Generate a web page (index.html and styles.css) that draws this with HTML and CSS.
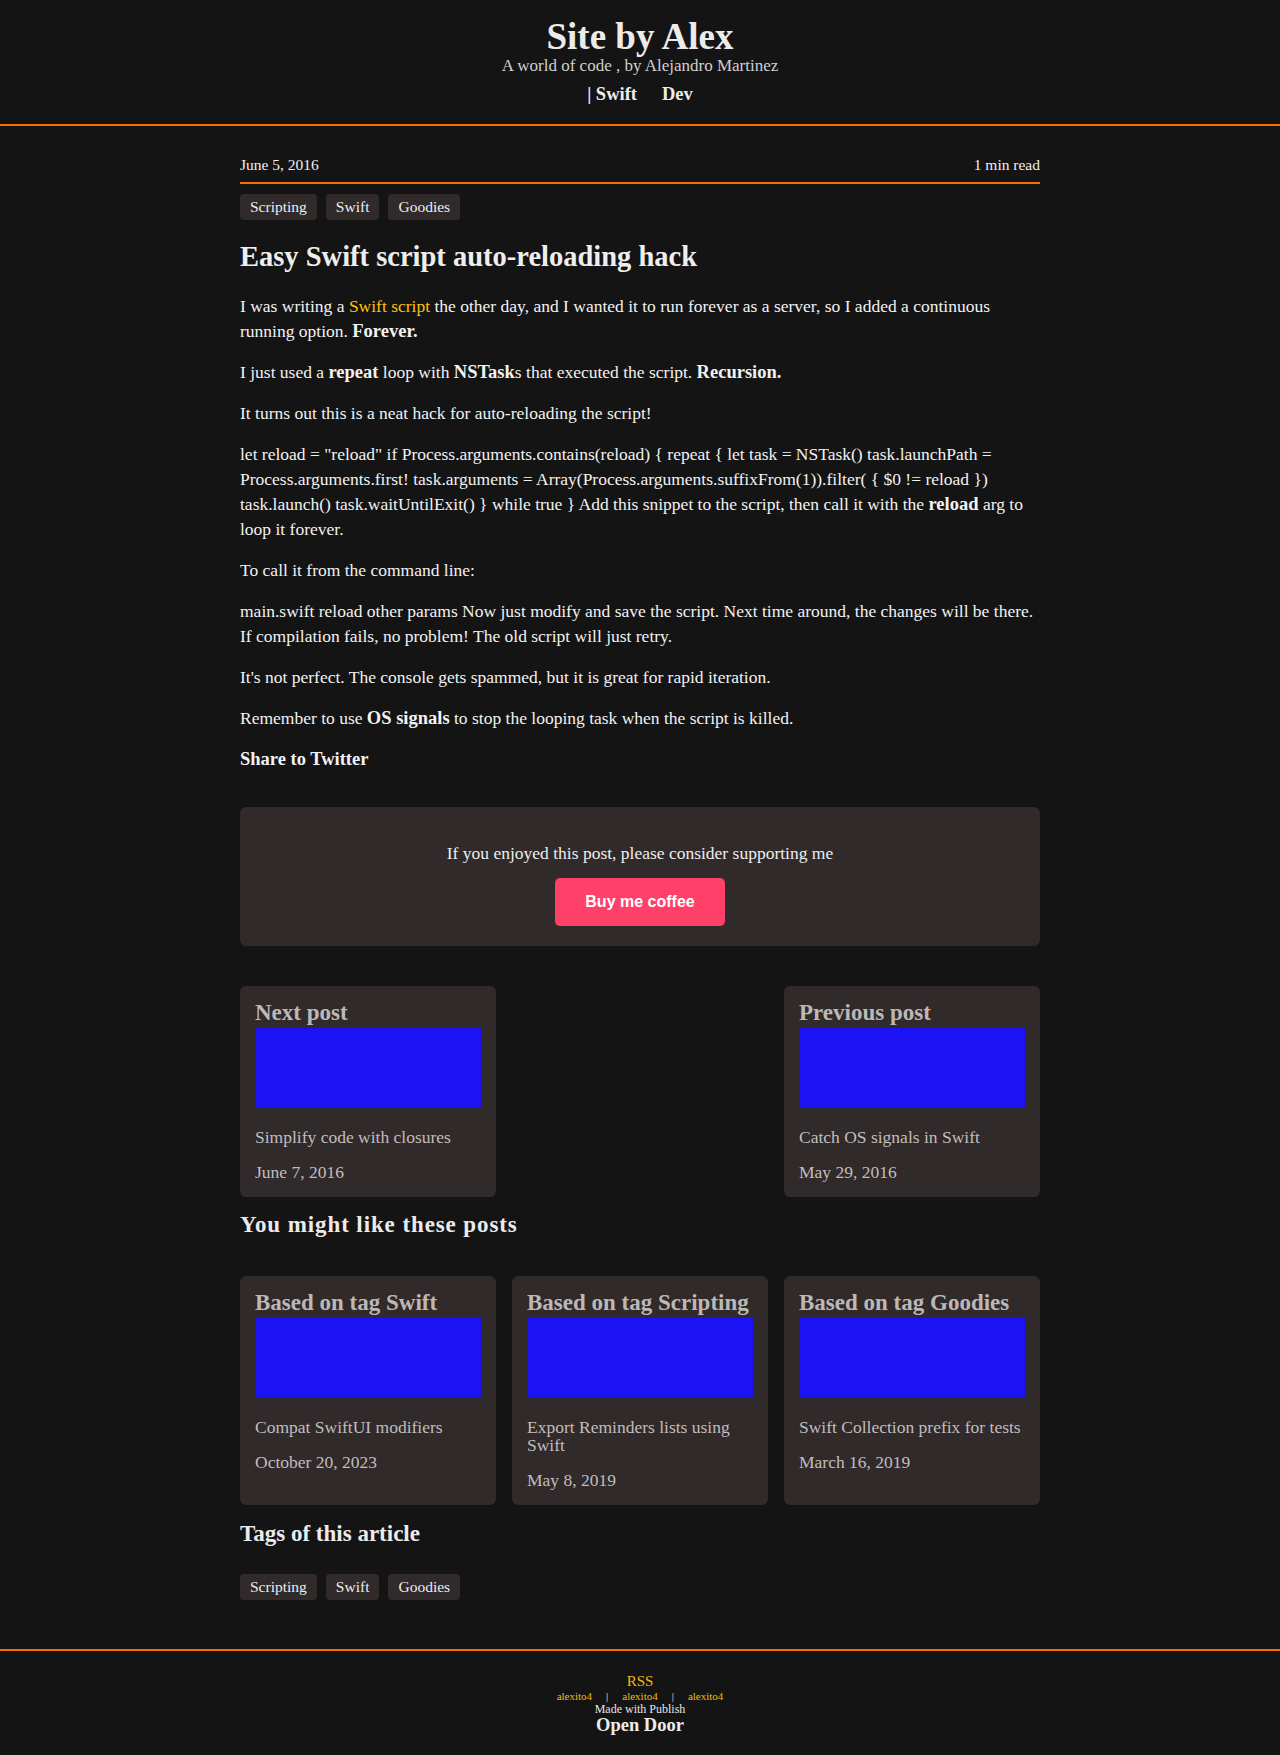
FILE: index.html
```
<!DOCTYPE html>
<html lang="en">
<head>
<meta charset="utf-8">
<title>Easy Swift script auto-reloading hack - Site by Alex</title>
<link rel="stylesheet" href="styles.css">
</head>
<body>
<header class="site-header">
  <h1 class="site-title">Site by Alex</h1>
  <p class="site-subtitle">A world of code , by Alejandro Martinez</p>
  <nav class="site-nav">
    <a href="#">| Swift</a>
    <a href="#">Dev</a>
  </nav>
</header>

<main class="content">
  <div class="meta">
    <span>June 5, 2016</span>
    <span>1 min read</span>
  </div>
  <ul class="tags">
    <li class="tag">Scripting</li>
    <li class="tag">Swift</li>
    <li class="tag">Goodies</li>
  </ul>

  <article class="post">
    <h2 class="post-title">Easy Swift script auto-reloading hack</h2>
    <p>I was writing a <a class="link" href="#">Swift script</a> the other day, and I wanted it to run forever as a server, so I added a continuous running option. <strong>Forever.</strong></p>
    <p>I just used a <strong>repeat</strong> loop with <strong>NSTask</strong>s that executed the script. <strong>Recursion.</strong></p>
    <p>It turns out this is a neat hack for auto-reloading the script!</p>
    <p>let reload = "reload" if Process.arguments.contains(reload) { repeat { let task = NSTask() task.launchPath = Process.arguments.first! task.arguments = Array(Process.arguments.suffixFrom(1)).filter( { $0 != reload }) task.launch() task.waitUntilExit() } while true } Add this snippet to the script, then call it with the <strong>reload</strong> arg to loop it forever.</p>
    <p>To call it from the command line:</p>
    <p>main.swift reload other params Now just modify and save the script. Next time around, the changes will be there. If compilation fails, no problem! The old script will just retry.</p>
    <p>It's not perfect. The console gets spammed, but it is great for rapid iteration.</p>
    <p>Remember to use <strong>OS signals</strong> to stop the looping task when the script is killed.</p>
    <p class="share"><a href="#">Share to Twitter</a></p>
  </article>

  <section class="support">
    <p>If you enjoyed this post, please consider supporting me</p>
    <a class="coffee" href="#">Buy me coffee</a>
  </section>

  <section class="pager">
    <a class="card" href="#">
      <h3 class="card-title">Next post</h3>
      <div class="card-img"></div>
      <p class="card-text">Simplify code with closures</p>
      <p class="card-date">June 7, 2016</p>
    </a>
    <a class="card card-right" href="#">
      <h3 class="card-title">Previous post</h3>
      <div class="card-img"></div>
      <p class="card-text">Catch OS signals in Swift</p>
      <p class="card-date">May 29, 2016</p>
    </a>
  </section>

  <h2 class="section-title related-title">You might like these posts</h2>
  <section class="related">
    <a class="card" href="#">
      <h3 class="card-title">Based on tag Swift</h3>
      <div class="card-img"></div>
      <p class="card-text">Compat SwiftUI modifiers</p>
      <p class="card-date">October 20, 2023</p>
    </a>
    <a class="card" href="#">
      <h3 class="card-title">Based on tag Scripting</h3>
      <div class="card-img"></div>
      <p class="card-text">Export Reminders lists using Swift</p>
      <p class="card-date">May 8, 2019</p>
    </a>
    <a class="card" href="#">
      <h3 class="card-title">Based on tag Goodies</h3>
      <div class="card-img"></div>
      <p class="card-text">Swift Collection prefix for tests</p>
      <p class="card-date">March 16, 2019</p>
    </a>
  </section>

  <h2 class="section-title tags-title">Tags of this article</h2>
  <ul class="tags">
    <li class="tag">Scripting</li>
    <li class="tag">Swift</li>
    <li class="tag">Goodies</li>
  </ul>
</main>

<footer class="site-footer">
  <a class="rss" href="#">RSS</a>
  <div class="social">
    <a href="#">alexito4</a>
    <span class="sep">|</span>
    <a href="#">alexito4</a>
    <span class="sep">|</span>
    <a href="#">alexito4</a>
  </div>
  <p class="made">Made with Publish</p>
  <p class="door">Open Door</p>
</footer>
</body>
</html>
```
FILE: styles.css
```
html, body {
  margin: 0;
  padding: 0;
  background: #141414;
}

body {
  font-family: "Liberation Serif", "Times New Roman", serif;
  font-size: 17.5px;
  color: #f2f2f2;
}

a {
  color: inherit;
  text-decoration: none;
}

/* Header */
.site-header {
  text-align: center;
  padding: 17px 0 20px;
  border-bottom: 2px solid #ff6d00;
}

.site-title {
  margin: 0;
  font-size: 37px;
  line-height: 40px;
  font-weight: bold;
  color: #ebebeb;
}

.site-subtitle {
  margin: 0;
  font-size: 17px;
  line-height: 18px;
  color: #d0d0d0;
}

.site-nav {
  margin-top: 9px;
  display: flex;
  justify-content: center;
  gap: 25px;
  font-size: 18.5px;
  line-height: 20px;
  font-weight: bold;
  color: #ececec;
}

/* Main */
.content {
  width: 800px;
  margin: 0 auto;
  padding: 29px 0 49px;
}

.meta {
  display: flex;
  justify-content: space-between;
  font-size: 15.5px;
  line-height: 20px;
  padding-bottom: 7px;
  border-bottom: 2px solid #ff6d00;
  color: #f0f0f0;
}

.tags {
  list-style: none;
  margin: 10px 0 0;
  padding: 0;
  display: flex;
  gap: 9px;
}

.tag {
  background: #302a2a;
  color: #eeeeee;
  font-size: 15.5px;
  line-height: 20px;
  padding: 3px 10px;
  border-radius: 4px;
}

.post-title {
  margin: 20px 0 20px;
  font-size: 28.5px;
  line-height: 34px;
  font-weight: bold;
  color: #eeeeee;
}

.post p {
  margin: 16px 0;
  line-height: 25px;
}

.post strong {
  font-size: 18.5px;
}

.link {
  color: #ffc107;
}

.share {
  font-weight: bold;
  font-size: 18.5px;
}

/* Support box */
.support {
  margin-top: 35px;
  background: #302a2a;
  border-radius: 6px;
  padding: 34px 20px 20px;
  text-align: center;
}

.support p {
  margin: 0;
  line-height: 25px;
  color: #eeeeee;
}

.coffee {
  display: inline-flex;
  align-items: center;
  justify-content: center;
  margin-top: 12px;
  width: 170px;
  height: 48px;
  background: #ff4169;
  border-radius: 5px;
  color: #ffffff;
  font-family: "Liberation Sans", Arial, sans-serif;
  font-weight: bold;
  font-size: 16px;
}

/* Cards */
.pager {
  margin-top: 40px;
  display: grid;
  grid-template-columns: repeat(3, 256px);
  gap: 16px;
}

.card-right {
  grid-column: 3;
}

.related {
  display: grid;
  grid-template-columns: repeat(3, 256px);
  gap: 16px;
}

.card {
  display: block;
  background: #302a2a;
  border-radius: 6px;
  padding: 12px 15px 16px;
  color: #c2bdbd;
}

.card-title {
  margin: 0;
  font-size: 23px;
  line-height: 30px;
  font-weight: bold;
  color: #bdb8b8;
}

.card-img {
  height: 80px;
  background: #1c13f5;
}

.card-text {
  margin: 20px 0 17px;
  line-height: 18px;
}

.card-date {
  margin: 0;
  line-height: 18px;
}

.section-title {
  font-size: 23px;
  line-height: 28px;
  font-weight: bold;
  color: #ebebeb;
}

.related-title {
  margin: 14px 0 37px;
  letter-spacing: 0.9px;
}

.tags-title {
  margin: 15px 0 26px;
}

.tags-title + .tags {
  margin-top: 0;
}

/* Footer */
.site-footer {
  border-top: 2px solid #ff6d00;
  padding: 22px 0 20px;
  text-align: center;
  color: #e6e6e6;
}

.rss {
  display: block;
  font-size: 15px;
  line-height: 17px;
  color: #f5b90a;
}

.social {
  display: flex;
  justify-content: center;
  gap: 14px;
  font-size: 11px;
  line-height: 13px;
}

.social a {
  color: #f5b90a;
}

.sep {
  color: #e6e6e6;
}

.made {
  margin: 0;
  font-size: 12px;
  line-height: 13px;
}

.door {
  margin: 0;
  font-size: 18.5px;
  line-height: 18px;
  font-weight: bold;
  color: #ececec;
}
```
